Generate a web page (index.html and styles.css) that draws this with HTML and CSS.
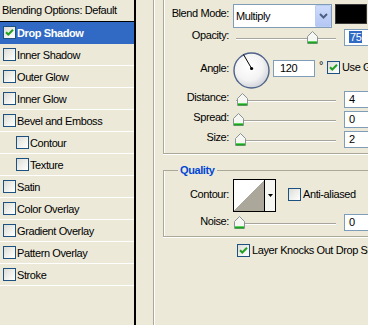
FILE: index.html
```html
<!DOCTYPE html>
<html>
<head>
<meta charset="utf-8">
<link rel="stylesheet" href="styles.css">
</head>
<body>
<div class="dialog">
  <aside class="styles-list">
    <div class="list-header">Blending Options: Default</div>
    <div class="list-item selected"><span class="cb"><svg viewBox="0 0 11 11" width="11" height="11"><path d="M2 5.2 L4.3 7.5 L9 2.8" stroke="#21a121" stroke-width="2" fill="none"/></svg></span><span>Drop Shadow</span></div>
    <div class="list-item"><span class="cb"></span><span>Inner Shadow</span></div>
    <div class="list-item"><span class="cb"></span><span>Outer Glow</span></div>
    <div class="list-item"><span class="cb"></span><span>Inner Glow</span></div>
    <div class="list-item"><span class="cb"></span><span>Bevel and Emboss</span></div>
    <div class="list-item sub"><span class="cb"></span><span>Contour</span></div>
    <div class="list-item sub"><span class="cb"></span><span>Texture</span></div>
    <div class="list-item"><span class="cb"></span><span>Satin</span></div>
    <div class="list-item"><span class="cb"></span><span>Color Overlay</span></div>
    <div class="list-item"><span class="cb"></span><span>Gradient Overlay</span></div>
    <div class="list-item"><span class="cb"></span><span>Pattern Overlay</span></div>
    <div class="list-item"><span class="cb"></span><span>Stroke</span></div>
  </aside>

  <main class="settings">
    <div class="outer-group">
      <section class="structure">
        <div class="row row-blend">
          <span class="lbl">Blend Mode:</span>
          <div class="select">
            <span class="select-text">Multiply</span>
            <span class="select-btn"><svg width="9" height="6" viewBox="0 0 9 6"><path d="M1 1 L4.5 4.5 L8 1" stroke="#4d6185" stroke-width="2" fill="none"/></svg></span>
          </div>
          <div class="swatch"></div>
        </div>

        <div class="row row-opacity">
          <span class="lbl">Opacity:</span>
          <div class="slider">
            <div class="track"></div>
            <svg class="thumb" style="left:71px" width="11" height="13" viewBox="0 0 11 13"><path d="M0.5 5.5 L5.5 0.5 L10.5 5.5 V12.5 H0.5 Z" fill="#f6f6f3" stroke="#8a9497"/><rect x="1" y="10" width="9" height="1" fill="#5fd35f"/><rect x="1" y="11" width="9" height="1.5" fill="#21a121"/></svg>
          </div>
          <div class="num"><span class="hl">75</span></div>
        </div>

        <div class="row row-angle">
          <span class="lbl">Angle:</span>
          <svg class="dial" width="37" height="37" viewBox="0 0 37 37">
            <defs>
              <radialGradient id="dialg" cx="42%" cy="38%" r="62%">
                <stop offset="0" stop-color="#ffffff"/>
                <stop offset="0.65" stop-color="#f3f3f3"/>
                <stop offset="1" stop-color="#d2d5dc"/>
              </radialGradient>
            </defs>
            <circle cx="18.5" cy="18.5" r="17.5" fill="url(#dialg)" stroke="#4f628a" stroke-width="1.4"/>
            <line x1="18.6" y1="16.5" x2="10.5" y2="2.5" stroke="#000" stroke-width="1"/>
            <circle cx="18.6" cy="16.5" r="1.6" fill="#000"/>
          </svg>
          <div class="num num-angle">120</div>
          <span class="deg">°</span>
          <span class="cb cb-row"><svg viewBox="0 0 11 11" width="11" height="11"><path d="M2 5.2 L4.3 7.5 L9 2.8" stroke="#21a121" stroke-width="2" fill="none"/></svg></span>
          <span class="cb-text">Use Global Light</span>
        </div>

        <div class="row row-distance">
          <span class="lbl">Distance:</span>
          <div class="slider">
            <div class="track"></div>
            <svg class="thumb" style="left:1px" width="11" height="13" viewBox="0 0 11 13"><path d="M0.5 5.5 L5.5 0.5 L10.5 5.5 V12.5 H0.5 Z" fill="#f6f6f3" stroke="#8a9497"/><rect x="1" y="10" width="9" height="1" fill="#5fd35f"/><rect x="1" y="11" width="9" height="1.5" fill="#21a121"/></svg>
          </div>
          <div class="num">4</div>
        </div>

        <div class="row row-next">
          <span class="lbl">Spread:</span>
          <div class="slider">
            <div class="track"></div>
            <svg class="thumb" style="left:-3px" width="11" height="13" viewBox="0 0 11 13"><path d="M0.5 5.5 L5.5 0.5 L10.5 5.5 V12.5 H0.5 Z" fill="#f6f6f3" stroke="#8a9497"/><rect x="1" y="10" width="9" height="1" fill="#5fd35f"/><rect x="1" y="11" width="9" height="1.5" fill="#21a121"/></svg>
          </div>
          <div class="num">0</div>
        </div>

        <div class="row row-next">
          <span class="lbl">Size:</span>
          <div class="slider">
            <div class="track"></div>
            <svg class="thumb" style="left:-1px" width="11" height="13" viewBox="0 0 11 13"><path d="M0.5 5.5 L5.5 0.5 L10.5 5.5 V12.5 H0.5 Z" fill="#f6f6f3" stroke="#8a9497"/><rect x="1" y="10" width="9" height="1" fill="#5fd35f"/><rect x="1" y="11" width="9" height="1.5" fill="#21a121"/></svg>
          </div>
          <div class="num">2</div>
        </div>
      </section>

      <fieldset class="quality">
        <legend>Quality</legend>
        <div class="row row-contour">
          <span class="lbl lbl-contour">Contour:</span>
          <div class="contour">
            <div class="contour-img"></div>
            <div class="contour-arrow"><svg width="5" height="3" viewBox="0 0 5 3"><path d="M0 0 H5 L2.5 3 Z" fill="#000"/></svg></div>
          </div>
          <span class="cb cb-anti"></span>
          <span class="cb-text cb-anti-text">Anti-aliased</span>
        </div>
        <div class="row row-noise">
          <span class="lbl lbl-noise">Noise:</span>
          <div class="slider">
            <div class="track"></div>
            <svg class="thumb" style="left:-2px" width="11" height="13" viewBox="0 0 11 13"><path d="M0.5 5.5 L5.5 0.5 L10.5 5.5 V12.5 H0.5 Z" fill="#f6f6f3" stroke="#8a9497"/><rect x="1" y="10" width="9" height="1" fill="#5fd35f"/><rect x="1" y="11" width="9" height="1.5" fill="#21a121"/></svg>
          </div>
          <div class="num">0</div>
        </div>
      </fieldset>

      <div class="knockout">
        <span class="cb"><svg viewBox="0 0 11 11" width="11" height="11"><path d="M2 5.2 L4.3 7.5 L9 2.8" stroke="#21a121" stroke-width="2" fill="none"/></svg></span>
        <span class="knock-text">Layer Knocks Out Drop Shadow</span>
      </div>
    </div>
  </main>
</div>
</body>
</html>
```

FILE: styles.css
```css
* {
  box-sizing: border-box;
}

html,
body {
  margin: 0;
  padding: 0;
}

body {
  background: #ece9d8;
  font-family: "Liberation Sans", Arial, sans-serif;
  font-size: 11px;
  letter-spacing: -0.4px;
  color: #000;
  overflow: hidden;
}

.dialog {
  display: flex;
  width: 368px;
  height: 325px;
  overflow: hidden;
}

/* ---------- left list ---------- */
.styles-list {
  width: 136px;
  flex: none;
  border-right: 2px solid #000;
}

.list-header {
  height: 22px;
  border-bottom: 1px solid #000;
  padding-left: 2px;
  line-height: 21px;
  white-space: nowrap;
}

.list-item {
  height: 22px;
  border-bottom: 1px solid #fff;
  display: flex;
  align-items: center;
  gap: 1px;
  padding-left: 3px;
  white-space: nowrap;
}

.list-item.sub {
  padding-left: 16px;
}

.list-item.selected {
  background: #316ac5;
  border-bottom-color: #316ac5;
  color: #fff;
  font-weight: bold;
}

/* ---------- checkbox ---------- */
.cb {
  width: 13px;
  height: 13px;
  flex: none;
  border: 1px solid #1c5180;
  background: linear-gradient(135deg, #dcdcd7 0%, #f2f2ef 60%, #ffffff 100%);
  display: flex;
}

.cb svg {
  display: block;
}

/* ---------- right settings ---------- */
.settings {
  flex: none;
  padding-left: 17px;
}

.outer-group {
  width: 260px;
  height: 325px;
  border-left: 1px solid #aca899;
  box-shadow: inset 1px 0 #fff;
  padding-left: 9px;
}

.structure {
  width: 240px;
  border: 1px solid #aca899;
  border-top: none;
  box-shadow: inset 1px 0 #fff, 0 1px #fff;
  padding: 4px 0 5px 0;
}

.row {
  display: flex;
  align-items: flex-start;
  white-space: nowrap;
}

.lbl {
  width: 65px;
  flex: none;
  text-align: right;
  line-height: 13px;
}

/* blend mode */
.row-blend .lbl {
  margin-top: 3px;
}

.select {
  width: 99px;
  height: 24px;
  flex: none;
  margin-left: 4px;
  border: 1px solid #7f9db9;
  background: #fff;
  display: flex;
}

.select-text {
  line-height: 13px;
  margin-top: 5px;
  padding-left: 2px;
}

.select-btn {
  margin-left: auto;
  width: 16px;
  height: 22px;
  border: 1px solid #bccdf4;
  border-radius: 1px;
  background: linear-gradient(#cddbfb, #b4c7f4);
  display: flex;
  align-items: center;
  justify-content: center;
}

.select-btn svg {
  display: block;
}

.swatch {
  width: 32px;
  height: 20px;
  flex: none;
  margin-left: 3px;
  background: #000;
  border: 1px solid #3a3a3a;
}

/* sliders */
.row-opacity {
  margin-top: 1px;
}

.slider {
  position: relative;
  width: 100px;
  height: 17px;
  flex: none;
  margin-left: 7px;
}

.track {
  margin-top: 9px;
  height: 2px;
  border-top: 1px solid #a7a59b;
  border-bottom: 1px solid #fff;
}

.thumb {
  position: absolute;
  top: 2px;
  display: block;
}

.num {
  width: 40px;
  height: 17px;
  flex: none;
  margin-left: 8px;
  border: 1px solid #7f9db9;
  background: #fff;
  padding-left: 4px;
  line-height: 15px;
}

.hl {
  background: #316ac5;
  color: #fff;
  padding: 0 1px;
}

/* angle */
.row-angle {
  margin-top: 6px;
}

.row-angle .lbl {
  margin-top: 10px;
}

.dial {
  display: block;
  flex: none;
  margin-left: 4px;
}

.num-angle {
  width: 42px;
  margin-left: 3px;
  margin-top: 8px;
  padding-left: 6px;
}

.deg {
  width: 12px;
  flex: none;
  padding-left: 4px;
  margin-top: 7px;
  line-height: 13px;
}

.cb-row {
  margin-top: 9px;
}

.cb-text {
  margin-left: 2px;
  margin-top: 9px;
  line-height: 13px;
}

.row-distance {
  margin-top: 2px;
}

.row-next {
  margin-top: 3px;
}

/* quality */
.quality {
  width: 240px;
  margin: 10px 0 0 0;
  padding: 0 0 5px 0;
  min-width: 0;
  border: 1px solid #aca899;
  box-shadow: inset 1px 0 #fff, 0 1px #fff;
}

.quality legend {
  margin-left: 14px;
  padding: 0 2px;
  font-weight: bold;
  color: #0046d5;
  line-height: 13px;
}

.row-contour {
  margin-top: 2px;
}

.lbl-contour {
  margin-top: 9px;
}

.contour {
  display: flex;
  width: 43px;
  height: 33px;
  flex: none;
  margin-left: 4px;
  border: 1px solid #000;
}

.contour-img {
  width: 31px;
  height: 31px;
  border-right: 1px solid #000;
  background: linear-gradient(to bottom right, #ffffff 50%, #aba79a 50%);
}

.contour-arrow {
  flex: 1;
  background: #f6f6f3;
  display: flex;
  align-items: center;
  justify-content: center;
}

.contour-arrow svg {
  display: block;
}

.cb-anti {
  margin-left: 12px;
  margin-top: 9px;
}

.row-noise {
  margin-top: 2px;
}

.lbl-noise {
  margin-top: 1px;
}

/* knockout */
.knockout {
  display: flex;
  align-items: center;
  margin-top: 7px;
  margin-left: 74px;
  white-space: nowrap;
}

.knock-text {
  margin-left: 2px;
  line-height: 13px;
}
```
